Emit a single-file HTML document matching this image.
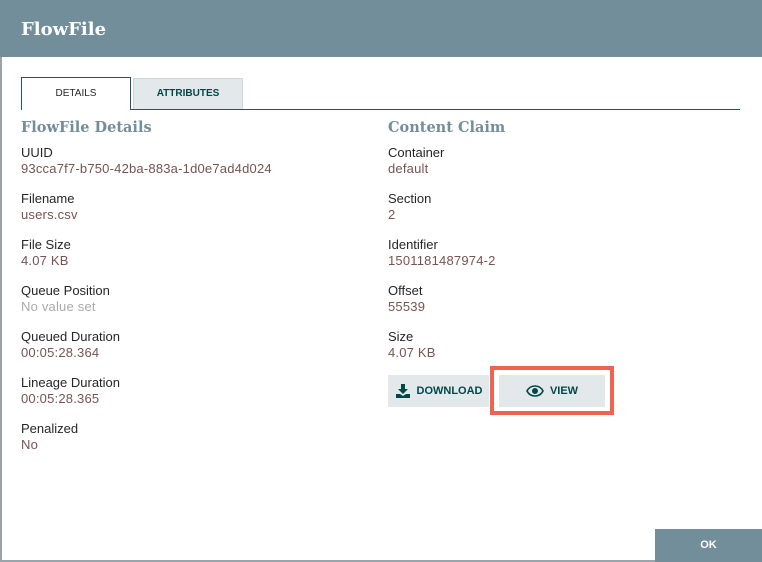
<!DOCTYPE html>
<html><head><style>
*{margin:0;padding:0;box-sizing:border-box}
body{width:762px;height:562px;background:#fff;position:relative;overflow:hidden;font-family:"Liberation Sans",sans-serif}
.frame{position:absolute;left:0;top:0;width:762px;height:562px;border-left:2px solid #9aa5ab;border-bottom:2px solid #9aa5ab}
.hdr{position:absolute;left:0;top:0;width:762px;height:57px;background:#728e9b}
.hdr h1{position:absolute;left:21px;top:19px;font-family:"DejaVu Serif",serif;font-size:18px;font-weight:bold;color:#fff}
.tab{position:absolute;top:77px;height:33px;font-size:10px;font-weight:bold;text-align:center;line-height:32px}
.t1{left:21px;width:110px;border:1px solid #1a5b5b;border-bottom:none;background:#fff;color:#262626;font-weight:normal;z-index:2;height:33px}
.t2{left:133px;width:110px;background:#e3e8eb;border:1px solid #cfd7dc;border-bottom:none;color:#004849;top:78px;height:31px;line-height:30px}
.line{position:absolute;left:21px;top:109px;width:719px;height:1px;background:#1a5b5b}
.h2{position:absolute;font-family:"DejaVu Serif",serif;font-weight:bold;font-size:14.5px;color:#728e9b}
.lbl{position:absolute;font-size:13px;color:#262626}
.val{position:absolute;font-size:13px;color:#775351;letter-spacing:0.2px}
.nv{color:#aaa}
.btn{position:absolute;background:#e3e8eb;color:#004849;font-size:11px;font-weight:bold;display:flex;align-items:center;justify-content:center;gap:6px}
.red{position:absolute;left:490px;top:366px;width:124px;height:49px;border:4px solid #ee6352}
.ok{position:absolute;left:655px;top:529px;width:107px;height:33px;background:#728e9b;color:#fff;font-size:11px;font-weight:bold;text-align:center;line-height:33px}
</style></head><body>
<div class="frame"></div>
<div class="hdr"><h1>FlowFile</h1></div>
<div class="tab t1">DETAILS</div>
<div class="tab t2">ATTRIBUTES</div>
<div class="line"></div>
<div class="h2" style="left:21px;top:119px">FlowFile Details</div>
<div class="h2" style="left:388px;top:119px">Content Claim</div>

<div class="lbl" style="left:21px;top:145px">UUID</div><div class="val" style="left:21px;top:161px">93cca7f7-b750-42ba-883a-1d0e7ad4d024</div>
<div class="lbl" style="left:21px;top:191px">Filename</div><div class="val" style="left:21px;top:207px">users.csv</div>
<div class="lbl" style="left:21px;top:237px">File Size</div><div class="val" style="left:21px;top:253px">4.07 KB</div>
<div class="lbl" style="left:21px;top:283px">Queue Position</div><div class="val nv" style="left:21px;top:299px">No value set</div>
<div class="lbl" style="left:21px;top:329px">Queued Duration</div><div class="val" style="left:21px;top:345px">00:05:28.364</div>
<div class="lbl" style="left:21px;top:375px">Lineage Duration</div><div class="val" style="left:21px;top:391px">00:05:28.365</div>
<div class="lbl" style="left:21px;top:421px">Penalized</div><div class="val" style="left:21px;top:437px">No</div>

<div class="lbl" style="left:388px;top:145px">Container</div><div class="val" style="left:388px;top:161px">default</div>
<div class="lbl" style="left:388px;top:191px">Section</div><div class="val" style="left:388px;top:207px">2</div>
<div class="lbl" style="left:388px;top:237px">Identifier</div><div class="val" style="left:388px;top:253px">1501181487974-2</div>
<div class="lbl" style="left:388px;top:283px">Offset</div><div class="val" style="left:388px;top:299px">55539</div>
<div class="lbl" style="left:388px;top:329px">Size</div><div class="val" style="left:388px;top:345px">4.07 KB</div>

<div class="btn" style="left:388px;top:375px;width:101px;height:32px">
<svg width="16" height="16" viewBox="0 0 16 16"><path d="M6 1h4v5h3l-5 5-5-5h3z" fill="#004849"/><path d="M1 11h4l3 2 3-2h4v4H1z" fill="#004849"/></svg>DOWNLOAD</div>
<div class="btn" style="left:499px;top:375px;width:106px;height:32px">
<svg width="18" height="12" viewBox="0 0 18 12"><path d="M1 6C3 2 6 1 9 1s6 1 8 5c-2 4-5 5-8 5S3 10 1 6z" fill="none" stroke="#004849" stroke-width="1.6"/><circle cx="9" cy="6" r="3" fill="#004849"/></svg>VIEW</div>
<div class="red"></div>
<div class="ok">OK</div>
</body></html>
